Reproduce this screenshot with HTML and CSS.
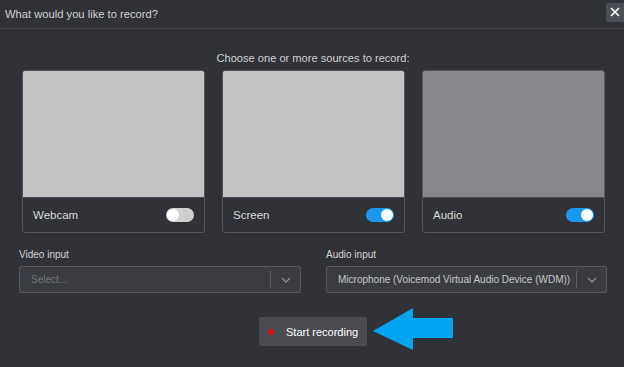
FILE: index.html
```html
<!DOCTYPE html>
<html lang="en">
<head>
    <meta charset="UTF-8">
    <meta name="viewport" content="width=device-width, initial-scale=1.0">
    <title>Record</title>
    <link rel="stylesheet" href="styles.css">
</head>
<body>
    <div class="dialog">
        <div class="header">
            <span class="title">What would you like to record?</span>
            <div class="close">
                <svg width="10" height="10" viewBox="0 0 10 10"><path d="M1 1L9 9M9 1L1 9" stroke="#fff" stroke-width="1.6"/></svg>
            </div>
        </div>
        <p class="prompt">Choose one or more sources to record:</p>
        <div class="cards">
            <div class="card">
                <div class="preview"></div>
                <div class="card-foot">
                    <span>Webcam</span>
                    <span class="toggle"></span>
                </div>
            </div>
            <div class="card">
                <div class="preview"></div>
                <div class="card-foot">
                    <span>Screen</span>
                    <span class="toggle on"></span>
                </div>
            </div>
            <div class="card">
                <div class="preview dark"></div>
                <div class="card-foot">
                    <span>Audio</span>
                    <span class="toggle on"></span>
                </div>
            </div>
        </div>
        <div class="inputs">
            <div class="field">
                <div class="label">Video input</div>
                <div class="select">
                    <span class="value placeholder">Select...</span>
                    <span class="sep"></span>
                    <span class="chev"><svg width="10" height="6" viewBox="0 0 10 6"><path d="M1 1L5 5L9 1" fill="none" stroke="#8a8c91" stroke-width="1.3"/></svg></span>
                </div>
            </div>
            <div class="field">
                <div class="label">Audio input</div>
                <div class="select">
                    <span class="value">Microphone (Voicemod Virtual Audio Device (WDM))</span>
                    <span class="sep"></span>
                    <span class="chev"><svg width="10" height="6" viewBox="0 0 10 6"><path d="M1 1L5 5L9 1" fill="none" stroke="#8a8c91" stroke-width="1.3"/></svg></span>
                </div>
            </div>
        </div>
        <div class="actions">
            <div class="start">
                <span class="dot"></span>
                <span>Start recording</span>
                <svg class="arrow" width="80" height="42" viewBox="0 0 80 42"><polygon points="0,23 40,0 40,10 80,10 80,30 40,30 40,42" fill="#00a4ef"/></svg>
            </div>
        </div>
    </div>
</body>
</html>
```

FILE: styles.css
```css
*{
    margin: 0px;
    padding: 0px;
    box-sizing: border-box;
}
body{
    background-color: #313237;
    font-family: "Liberation Sans", Arial, sans-serif;
    color: #d6d7d9;
}
.dialog{
    width: 624px;
    height: 367px;
    overflow: hidden;
}
.header{
    display: flex;
    align-items: center;
    height: 29px;
    padding-left: 5px;
    border-bottom: 1px solid #45474c;
}
.title{
    font-size: 11.2px;
    color: #cfd0d2;
}
.close{
    margin-left: auto;
    margin-bottom: 4px;
    width: 18px;
    height: 19px;
    background-color: #4b4e55;
    border-radius: 2px 0 0 2px;
    display: flex;
    align-items: center;
    justify-content: center;
}
.prompt{
    margin-top: 23px;
    text-align: center;
    font-size: 11.1px;
    line-height: 13px;
    color: #cfd0d2;
    padding-left: 2px;
}
.cards{
    display: grid;
    grid-template-columns: 183px 183px 183px;
    gap: 17px;
    padding-left: 22px;
    margin-top: 5px;
}
.card{
    border: 1px solid #56585d;
    border-radius: 3px;
    overflow: hidden;
}
.preview{
    height: 126px;
    background-color: #c4c4c4;
}
.preview.dark{
    background-color: #87888c;
}
.card-foot{
    display: flex;
    align-items: center;
    justify-content: space-between;
    height: 35px;
    padding: 0 10px;
    font-size: 11.5px;
    color: #d9dadc;
    border-top: 1px solid #4a4c51;
}
.toggle{
    position: relative;
    width: 28px;
    height: 14px;
    border-radius: 7px;
    background-color: #cfcfcf;
}
.toggle::after{
    content: "";
    position: absolute;
    top: 1px;
    left: 1px;
    width: 12px;
    height: 12px;
    border-radius: 50%;
    background-color: #fff;
}
.toggle.on{
    background-color: #1a98f0;
}
.toggle.on::after{
    left: 15px;
}
.inputs{
    display: grid;
    grid-template-columns: 282px 281px;
    gap: 25px;
    padding-left: 19px;
    margin-top: 16px;
}
.label{
    font-size: 10px;
    line-height: 12px;
    color: #d3d4d6;
    margin-bottom: 5px;
}
.select{
    display: flex;
    align-items: center;
    height: 27px;
    border: 1px solid #55575c;
    border-radius: 2px;
    background-color: #3a3c41;
    padding-left: 11px;
}
.value{
    flex: 1;
    font-size: 10px;
    color: #c6c7c9;
    white-space: nowrap;
}
.value.placeholder{
    color: #75777c;
}
.sep{
    width: 1px;
    height: 17px;
    background-color: #5d5f64;
}
.chev{
    width: 29px;
    display: flex;
    justify-content: center;
}
.actions{
    display: flex;
    justify-content: center;
    margin-top: 24px;
    padding-left: 2px;
}
.start{
    position: relative;
    display: flex;
    align-items: center;
    width: 108px;
    height: 29px;
    padding-left: 9px;
    background-color: #4a4c52;
    border-radius: 2px;
    font-size: 11px;
    color: #fff;
}
.dot{
    width: 6px;
    height: 6px;
    border-radius: 50%;
    background-color: #e01010;
    margin-right: 12px;
}
.arrow{
    position: absolute;
    left: 114px;
    top: -9px;
}
```
